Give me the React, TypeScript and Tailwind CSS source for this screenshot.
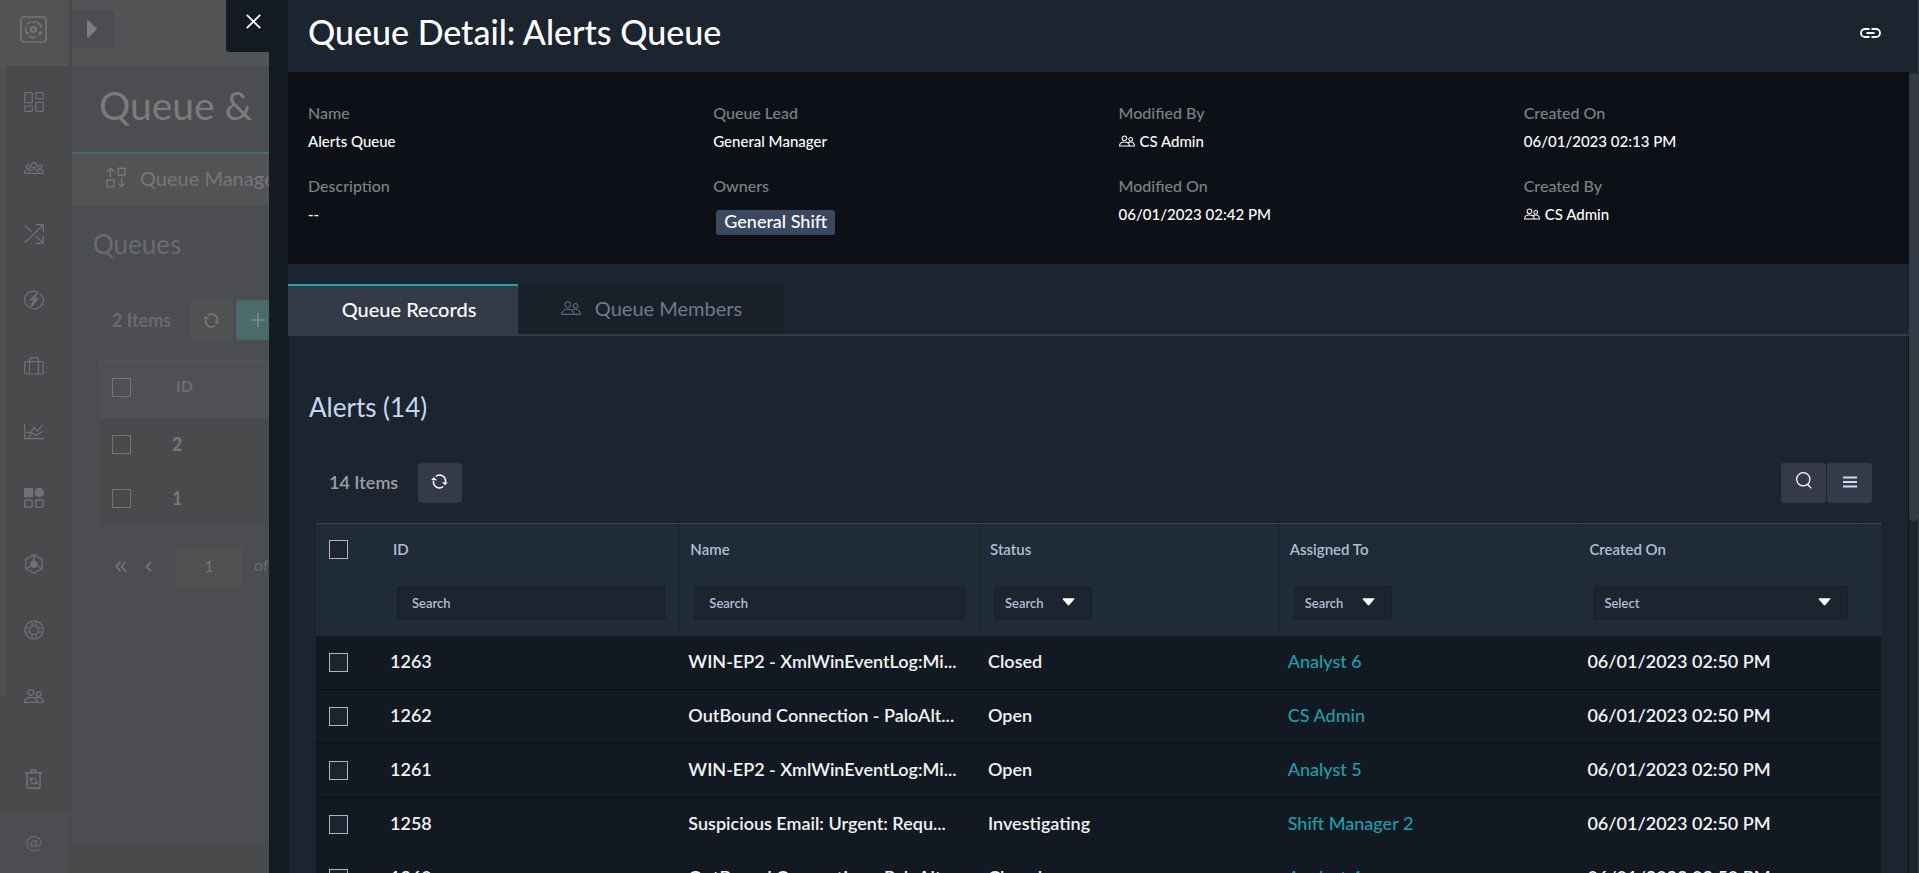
import type { ReactNode } from "react";

function Svg({ w = 20, h = 20, box = "0 0 20 20", sw = 1.2, children }: { w?: number; h?: number; box?: string; sw?: number; children: ReactNode }) {
  return (
    <svg width={w} height={h} viewBox={box} fill="none" stroke="currentColor" strokeWidth={sw} aria-hidden="true" className="shrink-0">
      {children}
    </svg>
  );
}

const People = ({ w = 20, h = 14, sw = 1.2 }: { w?: number; h?: number; sw?: number }) => (
  <Svg w={w} h={h} box="0 0 20 14" sw={sw}>
    <circle cx="6.8" cy="3.6" r="2.9" />
    <circle cx="14.6" cy="4.9" r="2.3" />
    <path d="M.7 13.3C.7 9.8 3.7 8.3 6.8 8.3s6.1 1.5 6.1 5z" />
    <path d="M10.6 9.5c1-.9 2.5-1.2 4-1.2 2.8 0 4.7 1.9 4.7 5h-6.5" />
  </Svg>
);

const Refresh = () => (
  <Svg w={17} h={15} box="0 0 17 15" sw={1.5}>
    <path d="M4.8 2.5A6 6 0 0 1 14.5 8M12.2 12.5A6 6 0 0 1 2.5 7" />
    <path d="M.6 6 2.6 3.5 5.6 6zM11.6 8.6h4.7L14 11z" fill="currentColor" strokeWidth=".5" />
  </Svg>
);

const navItems: { label: string; icon: ReactNode }[] = [
  {
    label: "Dashboard",
    icon: (
      <Svg>
        <rect x=".7" y=".7" width="7.6" height="10" rx=".5" />
        <rect x="11.7" y=".7" width="7.6" height="6" rx=".5" />
        <rect x=".7" y="14" width="7.6" height="5.3" rx=".5" />
        <rect x="11.7" y="10.3" width="7.6" height="9" rx=".5" />
      </Svg>
    ),
  },
  {
    label: "Teams",
    icon: (
      <Svg w={20} h={12} box="0 0 20 12">
        <circle cx="10" cy="3.2" r="2.5" />
        <circle cx="4" cy="4.7" r="1.8" />
        <circle cx="16" cy="4.7" r="1.8" />
        <path d="M5.5 11.3c0-3 2-4.3 4.5-4.3s4.5 1.3 4.5 4.3zM5.5 11.3H.7c0-2.5 1.3-3.8 3.300-3.800.9 0 1.7.2 2.300.8M14.500 11.300h4.800c0-2.500-1.300-3.800-3.300-3.800-.9 0-1.700.2-2.300.8" />
      </Svg>
    ),
  },
  {
    label: "Workflows",
    icon: (
      <Svg>
        <path d="M.7 1.3 8 8M11.800 12l7 6.500M.7 18.800 19 1M11.500.7h7.800v7.500M19.300 12v7.300h-7.600" />
      </Svg>
    ),
  },
  {
    label: "Automation",
    icon: (
      <Svg>
        <path d="M5.500 17.600A8.600 8.600 0 0 1 13 2M15.500 3.200A8.600 8.600 0 0 1 7.500 18.300" />
        <path d="M14.500.8 5.600 10.300h3.600L5.800 18.800l9-10.300h-3.800z" fill="currentColor" strokeWidth=".4" />
      </Svg>
    ),
  },
  {
    label: "Cases",
    icon: (
      <Svg w={20} h={18} box="0 0 20 18">
        <rect x=".7" y="4.7" width="18.6" height="12.3" rx="1.2" />
        <path d="M5.500 17V3.200C5.500 1.700 6.500.7 8 .7h4c1.500 0 2.500 1 2.500 2.500V17" />
      </Svg>
    ),
  },
  {
    label: "Reports",
    icon: (
      <Svg w={20} h={16} box="0 0 20 16">
        <path d="M.7 0v14.700H20M4.500 14l3-5.500 4.500 2.700L19 7.300M2 8.300h5l3-5 3.300 4L18.300.8" />
      </Svg>
    ),
  },
  {
    label: "Applications",
    icon: (
      <Svg sw={1.5}>
        <rect x=".5" y=".5" width="8" height="8" rx=".8" fill="currentColor" />
        <circle cx="15.3" cy="4.5" r="4" fill="currentColor" />
        <rect x=".8" y="12" width="7.3" height="7.2" rx="1" />
        <rect x="11.7" y="12" width="7.3" height="7.2" rx="1" />
      </Svg>
    ),
  },
  {
    label: "Resources",
    icon: (
      <Svg sw={1.3}>
        <path d="M10 .8 18.200 5.400v9.200L10 19.200 1.800 14.600V5.400z" />
        <path d="M10 6.600l3 1.700v3.600L10 13.500l-3-1.600V8.300z" fill="currentColor" />
        <path d="M10 1v5M6.500 12.200 2 14.800M13.500 12.200l4.500 2.600" />
      </Svg>
    ),
  },
  {
    label: "Help",
    icon: (
      <Svg>
        <circle cx="10" cy="10" r="9.2" />
        <circle cx="10" cy="10" r="4.3" />
        <path d="M8 1v5M12 1v5M8 14v5M12 14v5M1 8h5M1 12h5M14 8h5M14 12h5" />
      </Svg>
    ),
  },
  { label: "Users", icon: <People sw={1.3} /> },
];

const columns = ["ID", "Name", "Status", "Assigned To", "Created On"];

const alerts = [
  ["1263", "WIN-EP2 - XmlWinEventLog:Mi...", "Closed", "Analyst 6"],
  ["1262", "OutBound Connection - PaloAlt...", "Open", "CS Admin"],
  ["1261", "WIN-EP2 - XmlWinEventLog:Mi...", "Open", "Analyst 5"],
  ["1258", "Suspicious Email: Urgent: Requ...", "Investigating", "Shift Manager 2"],
  ["1260", "OutBound Connection - PaloAlt...", "Closed", "Analyst 4"],
];

const created = "06/01/2023 02:50 PM";

function Check({ label, dim = false }: { label: string; dim?: boolean }) {
  return (
    <input
      type="checkbox"
      aria-label={label}
      className={
        dim
          ? "block size-[19px] appearance-none border border-[#737474] bg-transparent"
          : "block size-[19px] appearance-none border border-[#b4b5b7] bg-[#1c2430]"
      }
    />
  );
}

function Field({ label, children }: { label: string; children: ReactNode }) {
  return (
    <div className="h-[73px] pl-5">
      <dt className="text-base leading-7 font-medium text-[#7d8084]">{label}</dt>
      <dd className="text-[15px] leading-7 font-medium text-white">{children}</dd>
    </div>
  );
}

const Admin = () => (
  <span className="flex items-center gap-[5px]">
    <People w={16} h={12} sw={1.3} />
    CS Admin
  </span>
);

function Picker({ label, text, wide = false }: { label: string; text: string; wide?: boolean }) {
  return (
    <div className={wide ? "relative" : "relative w-[98px]"}>
      <select
        aria-label={label}
        className="block h-[34px] w-full appearance-none rounded-[3px] border border-[#19202a] bg-[#1c2430] pb-px pl-[10px] text-[13px] font-semibold text-[#b1bfd3]"
      >
        <option>{text}</option>
      </select>
      <svg width="13" height="8" viewBox="0 0 13 8" fill="#fff" aria-hidden="true" className="pointer-events-none absolute top-3 right-[17px]">
        <path d="M1.500.3h10c.9 0 1.200.7.6 1.300L7.300 7c-.5.5-1.100.5-1.600 0L.9 1.600C.3 1 .6.3 1.500.3z" />
      </svg>
    </div>
  );
}

function Background() {
  return (
    <div className="flex h-full bg-[#494a4b] text-[#737475]">
      <aside className="flex w-[72px] shrink-0 flex-col">
        <div className="flex h-[66px] shrink-0 items-center border-r-[3px] border-[#48494a] bg-[#525354] pb-2 pl-5">
          <Svg w={27} h={27} box="0 0 27 27" sw={1.7}>
            <rect x="1" y="1" width="25" height="25" rx="3" />
            <circle cx="13.5" cy="13.5" r="2.5" strokeWidth="2.2" />
            <path d="M7.200 8.500a8 8 0 0 1 4.300-2.800M15.500 5.800a8 8 0 0 1 5.800 6M21.400 15a8 8 0 0 1-2.400 4.500M16.500 21a8 8 0 0 1-7.500-1M6.600 17.500a8 8 0 0 1-.6-6.500" />
            <path d="M13.500 4.800v3M20.500 18l-2.300-1.700M6.500 18l2.300-1.700" strokeWidth="1.8" />
          </Svg>
        </div>
        <div className="flex min-h-0 flex-1">
          <div className="h-[630px] w-[6px] bg-[#4f524e]" />
          <nav className="flex flex-1 flex-col pt-[3px] pr-[11px] text-[#6e7277]">
            {navItems.map((n) => (
              <button key={n.label} aria-label={n.label} className="flex h-[66px] w-full shrink-0 items-center justify-center">
                {n.icon}
              </button>
            ))}
            <button aria-label="Recycle bin" className="mt-auto flex h-[66px] w-full shrink-0 items-center justify-center">
              <Svg w={17} h={20} box="0 0 17 20" sw={1.6}>
                <path d="M0 3.800h17M6 3.500V1h5v2.500M2 4v13.500c0 1 .6 1.600 1.600 1.600h9.800c1 0 1.600-.6 1.600-1.600V4" />
                <path d="M11.700 11.300C11 9.300 7.500 8.600 5.500 10.500M5.300 12.800c.8 2 4.200 2.700 6.200.8M5 8.500v2.600h2.500M12 15.600V13H9.500" strokeWidth="1.3" />
              </Svg>
            </button>
          </nav>
        </div>
        <div className="mr-[3px] flex h-[61px] shrink-0 items-center justify-center bg-[#4c4d50] pr-[2px] pb-1 text-xl text-[#68696a]">@</div>
      </aside>
      <main className="flex min-w-0 flex-1 flex-col">
        <div className="flex h-[66px] shrink-0 items-start bg-[#525354] pt-[10px]">
          <button aria-label="Expand menu" className="flex h-[38px] w-[42px] items-center justify-center rounded-r bg-[#4c4d50] pr-[2px]">
            <svg width="10" height="18" viewBox="0 0 10 18" fill="#7d7d7d" aria-hidden="true">
              <path d="M0 1.500C0 .3 1 0 1.800.8l7.600 7.400c.6.600.6 1 0 1.600l-7.600 7.400C1 18 0 17.700 0 16.500z" />
            </svg>
          </button>
        </div>
        <div className="mb-[31px] flex-1 border-t border-[#48494a] bg-[#4c4d50]">
          <h1 className="flex h-[85px] items-center pb-2 pl-[27px] text-[39px] whitespace-nowrap text-[#7b7b7b]">Queue &amp;</h1>
          <div className="flex h-[53px] items-center gap-[14px] border-t-2 border-[#4a6b6b] bg-[#525354] pb-1 pl-[34px] text-xl whitespace-nowrap text-[#767778]">
            <Svg w={20} h={21} box="0 0 20 21" sw={1.4}>
              <rect x=".9" y="13" width="6.8" height="6.8" />
              <rect x="12.3" y="1.3" width="6.8" height="6.8" />
              <path d="M4.300 10.500V1.500M1 4.500l3.300-3.300L7.600 4.500M15.700 10.500v9M12.400 16.500l3.300 3.300 3.300-3.300" />
            </Svg>
            Queue Management
          </div>
          <h2 className="flex h-[79px] items-center pl-[21px] text-[26px] text-[#686c72]">Queues</h2>
          <div className="mt-4 flex h-10 items-center pl-10">
            <span className="w-[78px] text-lg font-bold text-[#696b6c]">2 Items</span>
            <button aria-label="Refresh queues" className="flex h-10 w-[43px] items-center justify-center rounded-[3px] bg-[#505151] text-[#7b7b7b]">
              <Refresh />
            </button>
            <button aria-label="Add queue" className="ml-[3px] flex h-10 w-[43px] items-center justify-center rounded-[3px] bg-[#4b6a6b] text-[#7f8888]">
              <Svg w={14} h={14} box="0 0 14 14" sw={1.6}>
                <path d="M7 0v14M0 7h14" />
              </Svg>
            </button>
          </div>
          <table className="mt-5 ml-[27px] w-[600px] table-fixed border-separate border-spacing-0 text-left">
            <thead>
              <tr className="h-[58px] bg-[#4f5053]">
                <th className="w-[64px] border-t border-[#545558] pb-1 pl-[13px]">
                  <Check dim label="Select all queues" />
                </th>
                <th className="border-t border-[#545558] pb-2 pl-[13px] text-base font-bold text-[#6c6d70]">ID</th>
              </tr>
            </thead>
            <tbody className="bg-[#494a4b]">
              {["2", "1"].map((id) => (
                <tr key={id} className="h-[54px]">
                  <td className="pb-px pl-[13px]">
                    <Check dim label={"Select queue " + id} />
                  </td>
                  <td className="pb-[3px] pl-[9px] text-lg font-bold text-[#777879]">{id}</td>
                </tr>
              ))}
            </tbody>
          </table>
          <div className="mt-5 flex h-10 items-center pl-[43px] text-base">
            <button aria-label="First page" className="mr-[18px]">
              <Svg w={12} h={11} box="0 0 12 11" sw={1.8}>
                <path d="M5.500.7 1.200 5.500l4.300 4.800M10.800.7 6.500 5.500l4.300 4.800" />
              </Svg>
            </button>
            <button aria-label="Previous page" className="mr-6">
              <Svg w={7} h={11} box="0 0 7 11" sw={1.8}>
                <path d="M6 .7 1.500 5.500 6 10.300" />
              </Svg>
            </button>
            <input aria-label="Page" defaultValue="1" className="h-[39px] w-[66px] bg-[#505151] pb-[2px] text-center text-base text-[#777879]" />
            <span className="ml-3 pb-[2px] text-[#696b6c]">of 1</span>
          </div>
        </div>
      </main>
    </div>
  );
}

export default function App() {
  return (
    <div className="relative h-screen overflow-hidden bg-[#494a4b] font-[Lato,sans-serif]">
      <Background />
      <div role="dialog" aria-label="Queue Detail" className="absolute inset-y-0 right-0 left-[226px] flex">
        <button aria-label="Close" className="flex h-[52px] w-[43px] shrink-0 items-center justify-center rounded-bl-[3px] bg-[#141b23] pb-[9px] pl-3 text-white">
          <Svg w={15} h={15} box="0 0 15 15" sw={1.8}>
            <path d="M.8.8l13.400 13.400M14.200.8.8 14.200" />
          </Svg>
        </button>
        <div className="w-[19px] shrink-0 bg-[#141b23]" />
        <section className="flex min-w-0 flex-1 flex-col border-r border-[#3a3d42] bg-[#1c2430]">
          <header className="flex h-[72px] shrink-0 items-center justify-between pr-[37px] pb-[6px] pl-5">
            <h1 className="pb-[3px] text-[34px] leading-none font-medium text-white">Queue Detail: Alerts Queue</h1>
            <button aria-label="Copy link" className="text-white">
              <Svg w={21} h={10} box="0 0 21 10" sw={1.8}>
                <path d="M9.500 1H5a4 4 0 0 0 0 8h4.500M11.500 1H16a4 4 0 0 1 0 8h-4.500M6.500 5h8" />
              </Svg>
            </button>
          </header>
          <div className="flex min-h-0 flex-1">
            <div className="min-w-0 flex-1 overflow-hidden">
              <dl className="grid h-[192px] grid-cols-4 content-start bg-[#0d1117] pt-[27px]">
                <Field label="Name">Alerts Queue</Field>
                <Field label="Queue Lead">General Manager</Field>
                <Field label="Modified By">
                  <Admin />
                </Field>
                <Field label="Created On">06/01/2023 02:13 PM</Field>
                <Field label="Description">--</Field>
                <Field label="Owners">
                  <span className="mt-[10px] ml-[3px] inline-block h-[25px] rounded-[3px] bg-[#3a4860] px-2 text-lg leading-[22px]">General Shift</span>
                </Field>
                <Field label="Modified On">06/01/2023 02:42 PM</Field>
                <Field label="Created By">
                  <Admin />
                </Field>
              </dl>
              <div role="tablist" className="mt-5 flex h-[52px] border-b-2 border-[#343a47]">
                <button role="tab" aria-selected="true" className="-mb-[2px] w-[230px] border-t-2 border-[#1fa5ac] bg-[#343a47] pb-1 pl-3 text-xl font-medium text-white">
                  Queue Records
                </button>
                <button role="tab" aria-selected="false" className="ml-px flex w-[265px] items-center justify-center gap-[14px] bg-[#19202a] pb-[3px] text-xl text-[#70798a]">
                  <People sw={1} />
                  Queue Members
                </button>
              </div>
              <div className="border-x border-[#10151c] px-[27px]">
                <h2 className="-ml-[7px] pt-[55px] text-[26px] leading-8 text-[#c6d7f2]">Alerts (14)</h2>
                <div className="mt-10 flex items-center pr-[9px] pl-[13px]">
                  <span className="w-[89px] pb-[3px] text-lg font-semibold text-[#9b9fa4]">14 Items</span>
                  <button aria-label="Refresh" className="flex h-10 w-11 items-center justify-center rounded-[3px] bg-[#343a47] pr-px pb-1 text-white">
                    <Refresh />
                  </button>
                  <div className="ml-auto flex gap-px">
                    <button aria-label="Search" className="flex h-10 w-[45px] items-center justify-center rounded-[3px] bg-[#343a47] pb-[5px] text-white">
                      <Svg w={16} h={17} box="0 0 16 17" sw={1.3}>
                        <circle cx="7.3" cy="7.3" r="6.6" />
                        <path d="M11.200 12l4 4.300" />
                      </Svg>
                    </button>
                    <button aria-label="Columns" className="flex h-10 w-[45px] items-center justify-center rounded-[3px] bg-[#343a47] pb-[3px] text-[#c9d9f0]">
                      <Svg w={14} h={12} box="0 0 14 12" sw={2}>
                        <path d="M0 1.500h14M0 6h14M0 10.500h14" />
                      </Svg>
                    </button>
                  </div>
                </div>
                <table className="mt-5 w-full table-fixed border-separate border-spacing-0 text-left">
                  <colgroup>
                    <col className="w-[67px]" />
                    <col className="w-[19%]" />
                    <col className="w-[19.15%]" />
                    <col className="w-[19.15%]" />
                    <col className="w-[19.15%]" />
                    <col />
                    <col className="w-[18px]" />
                  </colgroup>
                  <thead>
                    <tr className="bg-[#202b38] align-top">
                      <th className="h-[113px] border-t border-[#3a4a5e] pt-4 pl-[13px]">
                        <Check label="Select all alerts" />
                      </th>
                      {columns.map((c) => (
                        <th key={c} className="border-t border-r border-t-[#3a4a5e] border-r-[#1c2530] pt-[15px] text-[15px] leading-5 font-semibold text-[#b1bfd3]">
                          <span className="block pl-[10px]">{c}</span>
                          <div className="mt-[27px] px-[14px]">
                            {c === "ID" || c === "Name" ? (
                              <input
                                type="text"
                                aria-label={"Search " + c}
                                placeholder="Search"
                                className="block h-[34px] w-full border border-[#19202a] bg-[#1c2430] px-[14px] pb-px text-[13px] font-semibold text-[#b1bfd3] placeholder:text-[#b1bfd3]"
                              />
                            ) : (
                              <Picker label={"Filter " + c} text={c === "Created On" ? "Select" : "Search"} wide={c === "Created On"} />
                            )}
                          </div>
                        </th>
                      ))}
                      <th className="border-t border-[#3a4a5e]" />
                    </tr>
                  </thead>
                  <tbody className="[&_td]:h-[54px] [&_td]:border-b [&_td]:border-[#0b1016]">
                    {alerts.map(([id, name, status, owner]) => (
                      <tr key={id} className="bg-[#121922] text-lg whitespace-nowrap text-[#f2f3f4]">
                        <td className="pl-[13px]">
                          <Check label={"Select alert " + id} />
                        </td>
                        <td className="pb-1 pl-[7px] font-semibold">{id}</td>
                        <td className="overflow-hidden pb-1 pl-2 font-semibold">{name}</td>
                        <td className="pb-1 pl-2 font-semibold">{status}</td>
                        <td className="pb-1 pl-2">
                          <a href="#" className="font-medium text-[#1f9fa6]">
                            {owner}
                          </a>
                        </td>
                        <td className="pb-1 pl-2 font-semibold">{created}</td>
                        <td />
                      </tr>
                    ))}
                  </tbody>
                </table>
              </div>
            </div>
            <div className="w-[9px] shrink-0 bg-[#1c2430] pt-px">
              <div className="h-[56%] rounded-[4px] bg-[#343a47]" />
            </div>
          </div>
        </section>
      </div>
    </div>
  );
}
